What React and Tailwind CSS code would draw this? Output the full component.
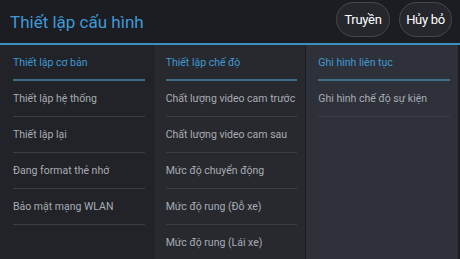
import React from "react";

const col1 = ["Thiết lập hệ thống", "Thiết lập lại", "Đang format thẻ nhớ", "Bảo mật mạng WLAN"];
const col2 = ["Chất lượng video cam trước", "Chất lượng video cam sau", "Mức độ chuyển động", "Mức độ rung (Đỗ xe)", "Mức độ rung (Lái xe)"];
const col3 = ["Ghi hình chế độ sự kiện"];

function Column({ title, items, bg, px }) {
  return (
    <div className={`flex-1 min-w-0 flex flex-col ${bg} ${px}`}>
      <div className="h-[36px] shrink-0 flex items-center border-b-2 border-[#3f6c86] text-[#3f9ad3] pt-[2px] whitespace-nowrap">
        {title}
      </div>
      {items.map((t) => (
        <div key={t} className="h-[36px] shrink-0 flex items-center border-b border-[#3a3d44] text-[#a9acb2] pt-[1px] whitespace-nowrap">
          {t}
        </div>
      ))}
    </div>
  );
}

export default function App() {
  return (
    <div className="w-[460px] h-[259px] bg-[#1c1d22] flex flex-col overflow-hidden" style={{ fontFamily: "Roboto, 'Noto Sans', sans-serif" }}>
      <div className="h-[43px] flex items-center justify-between pl-[10px] pr-[8px] shrink-0">
        <div className="text-[17px] text-[#3d9ad6] pt-[3px]">Thiết lập cấu hình</div>
        <div className="flex gap-[9px] items-center pb-[4px]">
          <div className="w-[54px] h-[35px] rounded-full bg-[#25272c] border border-[#45484e] text-white text-[13px] flex items-center justify-center tracking-[-0.3px]">Truyền</div>
          <div className="w-[53px] h-[35px] rounded-full bg-[#25272c] border border-[#45484e] text-white text-[13px] flex items-center justify-center tracking-[-0.3px]">Hủy bỏ</div>
        </div>
      </div>
      <div className="h-[2px] bg-[#3b8fc2] shrink-0" />
      <div className="flex-1 flex text-[10.5px] bg-[#1c1d22] gap-[1px] pr-[2px] overflow-hidden">
        <Column title="Thiết lập cơ bản" items={col1} bg="bg-[#212328]" px="pl-[13px] pr-[8px]" />
        <Column title="Thiết lập chế độ" items={col2} bg="bg-[#27292f]" px="pl-[12px] pr-[8px]" />
        <Column title="Ghi hình liên tục" items={col3} bg="bg-[#2e3139]" px="pl-[12px] pr-[8px]" />
      </div>
    </div>
  );
}
